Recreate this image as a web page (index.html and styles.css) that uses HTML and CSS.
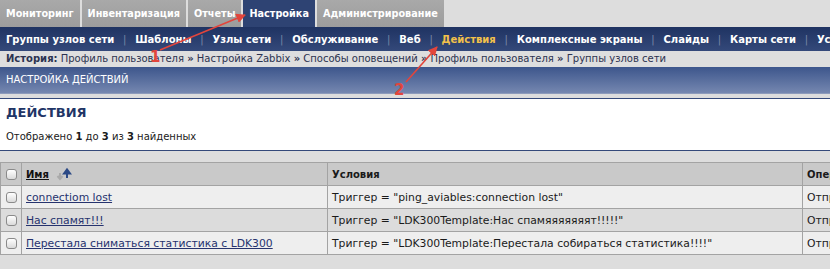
FILE: index.html
```html
<!DOCTYPE html>
<html lang="ru">
  <head>
    <meta charset="UTF-8">
    <title>Настройка действий</title>
    <link rel="stylesheet" href="styles.css">
  </head>
  <body>
    <div class="tabs">
      <a class="tab">Мониторинг</a>
      <a class="tab">Инвентаризация</a>
      <a class="tab">Отчеты</a>
      <a class="tab active">Настройка</a>
      <a class="tab">Администрирование</a>
    </div>
    <div class="subnav">
      <a>Группы узлов сети</a><span class="sep">|</span>
      <a>Шаблоны</a><span class="sep">|</span>
      <a>Узлы сети</a><span class="sep">|</span>
      <a>Обслуживание</a><span class="sep">|</span>
      <a>Веб</a><span class="sep">|</span>
      <a class="current">Действия</a><span class="sep">|</span>
      <a>Комплексные экраны</a><span class="sep">|</span>
      <a>Слайды</a><span class="sep">|</span>
      <a>Карты сети</a><span class="sep">|</span>
      <a>Услуги</a>
    </div>
    <div class="history">
      <b>История:</b> Профиль пользователя <span class="raquo">»</span> Настройка Zabbix <span class="raquo">»</span> Способы оповещений <span class="raquo">»</span> Профиль пользователя <span class="raquo">»</span> Группы узлов сети
    </div>
    <div class="page-head">НАСТРОЙКА ДЕЙСТВИЙ</div>
    <div class="summary">
      <h1>ДЕЙСТВИЯ</h1>
      <p>Отображено <b>1</b> до <b>3</b> из <b>3</b> найденных</p>
    </div>
    <table class="list">
      <colgroup>
        <col class="c-check">
        <col class="c-name">
        <col class="c-cond">
        <col class="c-ops">
      </colgroup>
      <tr class="head">
        <th><span class="box"></span></th>
        <th><u>Имя</u>
          <svg class="sort" width="16" height="14" viewBox="0 0 16 14">
            <path d="M4 6v5M1.5 9l2.5 3 2.5-3" stroke="#aaaaaa" stroke-width="2" fill="none"/>
            <path d="M11 11V4M8 6.5l3-4 3 4z" stroke="#2c4a86" stroke-width="2" fill="#2c4a86"/>
          </svg>
        </th>
        <th>Условия</th>
        <th>Операции</th>
      </tr>
      <tr class="odd">
        <td><span class="box"></span></td>
        <td><a>connectiom lost</a></td>
        <td>Триггер = "ping_aviables:connection lost"</td>
        <td>Отправить сообщение</td>
      </tr>
      <tr class="even">
        <td><span class="box"></span></td>
        <td><a>Нас спамят!!!</a></td>
        <td>Триггер = "LDK300Template:Нас спамяяяяяяят!!!!!"</td>
        <td>Отправить сообщение</td>
      </tr>
      <tr class="odd">
        <td><span class="box"></span></td>
        <td><a>Перестала сниматься статистика с LDK300</a></td>
        <td>Триггер = "LDK300Template:Перестала собираться статистика!!!!"</td>
        <td>Отправить сообщение</td>
      </tr>
    </table>

    <svg class="marks" width="830" height="269" viewBox="0 0 830 269">
      <defs>
        <marker id="head" viewBox="0 0 10 10" refX="9" refY="5" markerWidth="6" markerHeight="6" orient="auto">
          <path d="M0 0L10 5 0 10z" fill="#e2453c"/>
        </marker>
      </defs>
      <line x1="160" y1="50" x2="245" y2="15" stroke="#e2453c" stroke-width="1.6" marker-end="url(#head)"/>
      <text x="150" y="62" class="num">1</text>
      <line x1="406" y1="82" x2="437" y2="47" stroke="#e2453c" stroke-width="1.6" marker-end="url(#head)"/>
      <text x="394" y="95" class="num">2</text>
    </svg>
  </body>
</html>
```

FILE: styles.css
```css
body {
  margin: 0;
  height: 269px;
  overflow: hidden;
  position: relative;
  background: #dddddd;
  font-family: "DejaVu Sans", Verdana, sans-serif;
  font-size: 10px;
  color: #1a1a1a;
}
.tabs {
  display: flex;
  gap: 2px;
  height: 27px;
}
.tab {
  display: flex;
  align-items: center;
  padding: 0 6px;
  color: #fff;
  font-weight: bold;
  font-size: 9.7px;
  background: linear-gradient(to bottom, #a9a9a9, #9c9c9c);
}
.tab.active {
  background: #2e4373;
}
.subnav {
  display: flex;
  align-items: center;
  height: 24px;
  padding-left: 6px;
  white-space: nowrap;
  background: linear-gradient(to bottom, #1f3362, #34497a);
}
.subnav a {
  color: #fff;
  font-weight: bold;
  font-size: 10px;
}
.subnav a.current {
  color: #f2c14a;
}
.subnav .sep {
  margin: 0 8.8px;
  color: #7a88a8;
}
.history {
  height: 16px;
  line-height: 16px;
  padding-left: 6px;
  color: #2c3350;
  white-space: nowrap;
  background: #dedede;
}
.history .raquo {
  font-weight: bold;
}
.page-head {
  height: 26px;
  line-height: 26px;
  padding-left: 6px;
  color: #fff;
  border-bottom: 1px solid #8d9bbb;
  background: linear-gradient(to bottom, #3d568c, #7587b0);
}
.summary {
  margin-top: 4px;
  padding: 4px 6px 6px;
  background: #fff;
  border-top: 1px solid #34497a;
  border-bottom: 1px solid #34497a;
}
.summary h1 {
  margin: 0;
  font-size: 13px;
  color: #1f3566;
  line-height: 20px;
}
.summary p {
  margin: 7px 0 0;
  line-height: 14px;
}
.list {
  margin-top: 11px;
  width: 1000px;
  border-collapse: collapse;
  table-layout: fixed;
  font-size: 10.8px;
}
.c-check { width: 21px; }
.c-name { width: 306px; }
.c-cond { width: 475px; }
.list tr {
  height: 23px;
}
.list th, .list td {
  padding: 0 4px;
  text-align: left;
  white-space: nowrap;
  overflow: hidden;
  border: 1px solid #a3a3a3;
}
.list th:first-child, .list td:first-child {
  padding: 0;
  text-align: center;
}
.list th {
  background: #c9c9c9;
  font-weight: bold;
  font-size: 10px;
}
.list th u {
  color: #111;
}
.list tr.odd td { background: #eeeeee; }
.list tr.even td { background: #dcdcdc; }
.list td a {
  color: #26336e;
  text-decoration: underline;
}
.sort {
  vertical-align: -3px;
  margin-left: 4px;
}
.box {
  display: inline-block;
  width: 9px;
  height: 9px;
  vertical-align: middle;
  border: 1px solid #8a8a8a;
  border-radius: 3px;
  background: linear-gradient(to bottom, #ffffff, #dadada);
}
.marks {
  position: absolute;
  left: 0;
  top: 0;
  pointer-events: none;
}
.marks .num {
  fill: #e2453c;
  font-size: 15px;
  font-weight: bold;
  font-family: "DejaVu Sans", sans-serif;
}
```
